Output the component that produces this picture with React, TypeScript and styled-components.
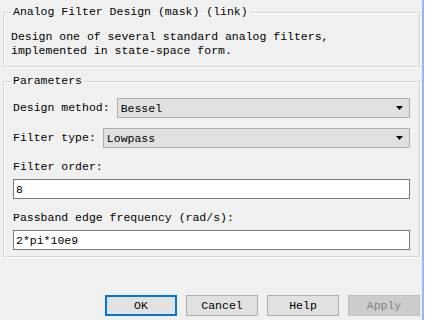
import React from "react";
import styled, { createGlobalStyle } from "styled-components";

const GlobalStyle = createGlobalStyle`
  html, body {
    margin: 0;
    padding: 0;
    background: #f0f0f0;
  }
  body {
    font-family: "Liberation Mono", "DejaVu Sans Mono", monospace;
    font-size: 11.5px;
    color: #000;
  }
`;

const SWindow = styled.div`
  display: flex;
  width: 425px;
  height: 320px;
  overflow: hidden;
  background: #f0f0f0;
`;

const SMain = styled.div`
  display: flex;
  flex-direction: column;
  width: 422px;
  box-sizing: border-box;
  padding: 5px 2px 0 3px;
`;

const SEdge = styled.div`
  width: 2px;
  background: #8fbde8;
  border-right: 1px solid #ffffff;
`;

const SFieldset = styled.fieldset<{ $gap?: number; $bottom?: number }>`
  margin: ${({ $gap }) => $gap ?? 0}px 0 0 0;
  padding: 0 9px ${({ $bottom }) => $bottom ?? 8}px 7px;
  border: 1px solid #d5d5d5;
  box-shadow: inset 1px 1px 0 #fff, 1px 1px 0 #fff;
  min-width: 0;
`;

const SLegend = styled.legend`
  padding: 0 2px;
  line-height: 14px;
  white-space: pre;
`;

const SDescription = styled.div`
  margin-top: 11px;
  line-height: 14px;
  white-space: pre;
`;

const SParams = styled.div`
  display: flex;
  flex-direction: column;
  padding: 10px 0 2px 2px;
`;

const SRow = styled.div<{ $top?: number }>`
  display: flex;
  align-items: center;
  gap: 7px;
  margin-top: ${({ $top }) => $top ?? 0}px;
`;

const SLabel = styled.div<{ $top?: number }>`
  line-height: 14px;
  margin-top: ${({ $top }) => $top ?? 0}px;
  white-space: pre;
`;

const SSelect = styled.div`
  flex: 1;
  display: flex;
  align-items: center;
  justify-content: space-between;
  height: 20px;
  box-sizing: border-box;
  padding: 0 6px 0 3px;
  background: #e1e1e1;
  border: 1px solid #adadad;
`;

const SInput = styled.input`
  display: block;
  width: 100%;
  height: 20px;
  box-sizing: border-box;
  margin: 5px 0 0 0;
  padding: 0 2px;
  border: 1px solid #7a7a7a;
  background: #fff;
  font-family: "Liberation Mono", "DejaVu Sans Mono", monospace;
  font-size: 11.5px;
  color: #000;
  outline: none;
`;

const SButtons = styled.div`
  display: flex;
  justify-content: flex-end;
  gap: 9px;
  margin-top: 38px;
`;

const SButton = styled.button<{ $default?: boolean }>`
  width: 72px;
  height: 21px;
  box-sizing: border-box;
  padding: 0;
  font-family: "Liberation Mono", "DejaVu Sans Mono", monospace;
  font-size: 11.5px;
  color: ${({ disabled }) => (disabled ? "#838383" : "#000")};
  background: ${({ disabled }) => (disabled ? "#cccccc" : "#e1e1e1")};
  border: ${({ $default, disabled }) =>
    $default ? "2px solid #0078d7" : disabled ? "1px solid #bfbfbf" : "1px solid #adadad"};
`;

const Arrow = () => (
  <svg width="7" height="4" viewBox="0 0 7 4">
    <path d="M0 0h7L3.5 4z" fill="#000" />
  </svg>
);

const Select: React.FC<{ value: string }> = ({ value }) => (
  <SSelect>
    <span>{value}</span>
    <Arrow />
  </SSelect>
);

export default function App() {
  return (
    <SWindow>
      <GlobalStyle />
      <SMain>
        <SFieldset>
          <SLegend>Analog Filter Design (mask) (link)</SLegend>
          <SDescription>
            {"Design one of several standard analog filters,\nimplemented in state-space form."}
          </SDescription>
        </SFieldset>
        <SFieldset $gap={7} $bottom={4}>
          <SLegend>Parameters</SLegend>
          <SParams>
            <SRow>
              <SLabel>Design method:</SLabel>
              <Select value="Bessel" />
            </SRow>
            <SRow $top={10}>
              <SLabel>Filter type:</SLabel>
              <Select value="Lowpass" />
            </SRow>
            <SLabel $top={12}>Filter order:</SLabel>
            <SInput defaultValue="8" />
            <SLabel $top={12}>Passband edge frequency (rad/s):</SLabel>
            <SInput defaultValue="2*pi*10e9" />
          </SParams>
        </SFieldset>
        <SButtons>
          <SButton $default>OK</SButton>
          <SButton>Cancel</SButton>
          <SButton>Help</SButton>
          <SButton disabled>Apply</SButton>
        </SButtons>
      </SMain>
      <SEdge />
    </SWindow>
  );
}
